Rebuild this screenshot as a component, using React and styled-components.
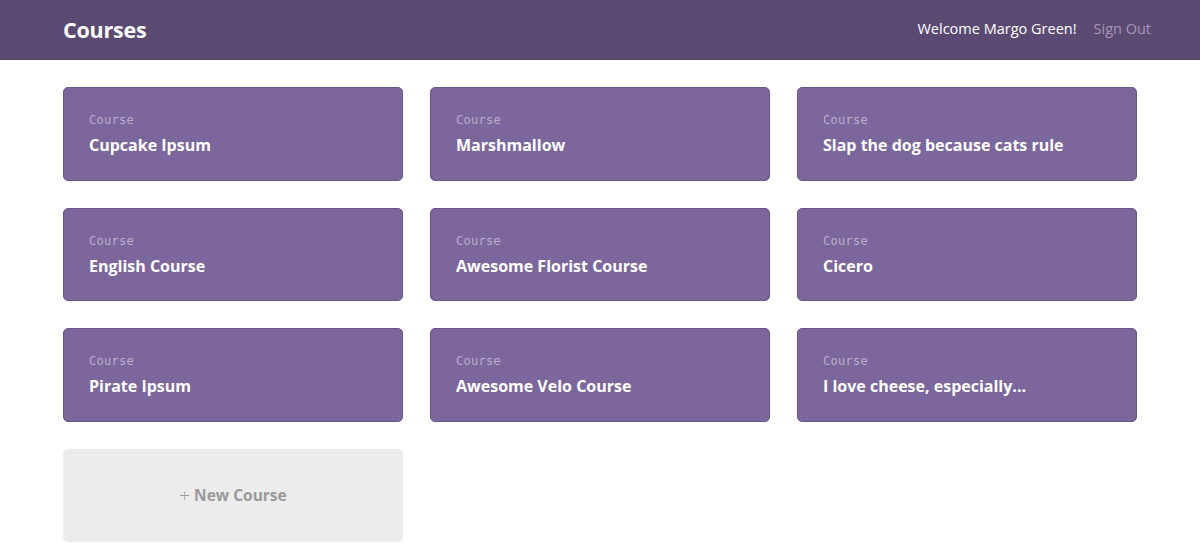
import React from "react";
import styled, { createGlobalStyle } from "styled-components";

const Global = createGlobalStyle`
  * { box-sizing: border-box; }
  body { margin: 0; background: #ffffff; font-family: "Open Sans", "Liberation Sans", sans-serif; }
`;

const Header = styled.header`
  height: 60px;
  background: #5a4a72;
  display: flex;
  align-items: center;
  justify-content: space-between;
  padding: 0 49px 2px 63px;
`;

const Brand = styled.h1`
  margin: 0;
  font-size: 21.5px;
  font-weight: 700;
  color: #ffffff;
  letter-spacing: -0.2px;
`;

const Nav = styled.nav`
  display: flex;
  align-items: center;
  gap: 17px;
  font-size: 14.5px;
  padding-bottom: 2px;
`;

const NavText = styled.span`
  color: ${(p) => (p.$muted ? "#a597b9" : "#ffffff")};
`;

const Grid = styled.main`
  display: grid;
  grid-template-columns: repeat(3, 340px);
  column-gap: 27px;
  row-gap: 27px;
  padding: 27px 63px;
`;

const Card = styled.div`
  height: 93.5px;
  border-radius: 5px;
  background: #7c679c;
  border: 1px solid #6a5689;
  padding: 2px 25px 0;
  display: flex;
  flex-direction: column;
  justify-content: center;
  gap: 7px;
`;

const Label = styled.span`
  font-family: "DejaVu Sans Mono", "Liberation Mono", monospace;
  font-size: 12px;
  color: #b9adcc;
  letter-spacing: 0.3px;
`;

const Title = styled.span`
  font-size: 16px;
  font-weight: 700;
  color: #ffffff;
`;

const NewCard = styled.div`
  height: 93.5px;
  border-radius: 5px;
  background: #ececec;
  display: flex;
  align-items: center;
  justify-content: center;
  gap: 4px;
  color: #999999;
  font-size: 15.5px;
  font-weight: 700;
`;

const Plus = styled.span`
  font-weight: 300;
  font-size: 19px;
  line-height: 1;
`;

const courses = [
  "Cupcake Ipsum",
  "Marshmallow",
  "Slap the dog because cats rule",
  "English Course",
  "Awesome Florist Course",
  "Cicero",
  "Pirate Ipsum",
  "Awesome Velo Course",
  "I love cheese, especially...",
];

export default function App() {
  return (
    <>
      <Global />
      <Header>
        <Brand>Courses</Brand>
        <Nav>
          <NavText>Welcome Margo Green!</NavText>
          <NavText $muted>Sign Out</NavText>
        </Nav>
      </Header>
      <Grid>
        {courses.map((c) => (
          <Card key={c}>
            <Label>Course</Label>
            <Title>{c}</Title>
          </Card>
        ))}
        <NewCard>
          <Plus>+</Plus>
          <span>New Course</span>
        </NewCard>
      </Grid>
    </>
  );
}
